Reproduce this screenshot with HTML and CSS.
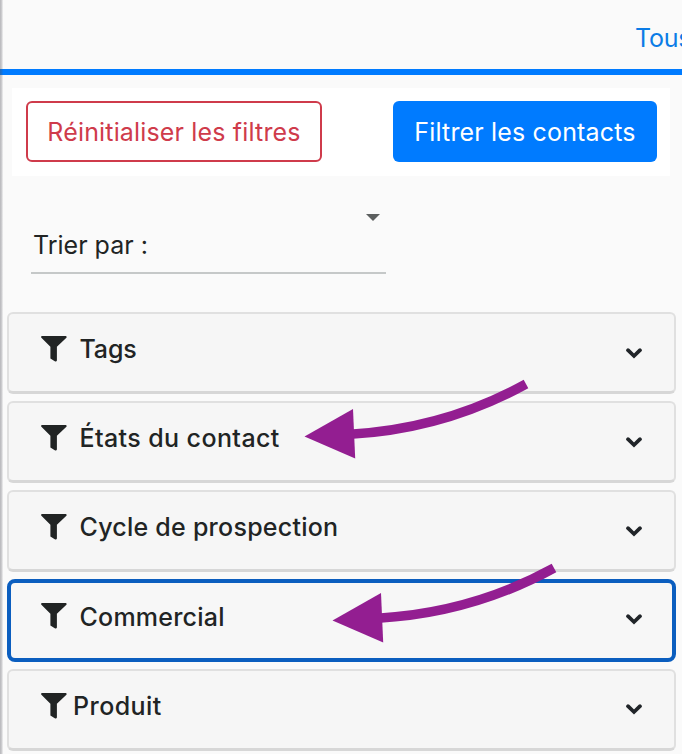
FILE: index.html
```html
<!DOCTYPE html>
<html lang="fr">
<head>
<meta charset="utf-8">
<title>Contacts</title>
<link rel="stylesheet" href="styles.css">
</head>
<body>
<svg class="defs" aria-hidden="true">
  <symbol id="funnel" viewBox="0 0 26 26"><path d="M0.8 0.1H24.9Q26.200 0.8 25.400 1.800L15.900 10.700V24.500Q15.400 26 13.800 25.200L9.400 22.400V10.700L0.400 1.800Q-0.500 0.800 0.800 0.100Z"/></symbol>
  <symbol id="chevron" viewBox="0 0 16 11"><path d="M2 2.200L8 8L14 2.200" fill="none" stroke="#212529" stroke-width="3.700" stroke-linecap="round"/></symbol>
</svg>
<div class="page">
  <header class="tabs"><a class="tab">Tous</a></header>
  <div class="actions">
    <button class="btn btn-reset">Réinitialiser les filtres</button>
    <button class="btn btn-apply">Filtrer les contacts</button>
  </div>
  <div class="sort"><span class="sort-label">Trier par :</span><span class="caret"></span></div>
  <main class="filters">
    <section class="card"><svg class="funnel"><use href="#funnel"/></svg><span class="name tags">Tags</span><svg class="chevron"><use href="#chevron"/></svg></section>
    <section class="card"><svg class="funnel"><use href="#funnel"/></svg><span class="name states">États du contact</span><svg class="chevron"><use href="#chevron"/></svg></section>
    <section class="card"><svg class="funnel"><use href="#funnel"/></svg><span class="name cycle">Cycle de prospection</span><svg class="chevron"><use href="#chevron"/></svg></section>
    <section class="card active"><svg class="funnel"><use href="#funnel"/></svg><span class="name sales">Commercial</span><svg class="chevron"><use href="#chevron"/></svg></section>
    <section class="card"><svg class="funnel"><use href="#funnel"/></svg><span class="name near">Produit</span><svg class="chevron"><use href="#chevron"/></svg></section>
  </main>
  <svg class="arrows" viewBox="0 0 682 754" aria-hidden="true">
    <g id="arrow"><path d="M526 384Q444 429 350 434.200" fill="none" stroke="#931e91" stroke-width="9.600"/><path d="M304.500 436.500L353 409L355.200 458.500Z" fill="#931e91"/></g>
    <use href="#arrow" x="28" y="184"/>
  </svg>
</div>
</body>
</html>
```
FILE: styles.css
```css
* { box-sizing: border-box; }
body { margin: 0; background: #fafafa; color: #212424; font-family: Inter, "Liberation Sans", sans-serif; font-size: 25px; }
.defs { display: none; }
.page { position: relative; width: 682px; height: 754px; overflow: hidden; }
.page::before { content: ""; position: absolute; z-index: 2; left: 0; top: 0; width: 3px; height: 100%; background: linear-gradient(90deg, rgba(80,80,90,.4), rgba(80,80,90,.25) 60%, rgba(80,80,90,.04)); }
.tabs { height: 75px; padding: 23px 0 0 635px; border-bottom: 6px solid #007bff; white-space: nowrap; line-height: 30px; }
.tab { color: #0b7ce6; letter-spacing: -.2px; }
.actions { display: flex; justify-content: space-between; height: 88px; margin: 13px 12px 0; padding: 13px 13px 0 14px; background: #fff; }
.btn { height: 61px; padding: 0; font: inherit; letter-spacing: .16px; border-radius: 6px; text-align: center; white-space: nowrap; }
.btn-reset { width: 296px; background: #fff; color: #cf3b4b; border: 2px solid #cf3b4b; }
.btn-apply { width: 264px; background: #007bff; color: #fff; border: 0; }
.sort { display: flex; justify-content: space-between; width: 355px; height: 61px; margin: 37px 0 0 31px; padding: 0 6px 0 2px; border-bottom: 2px solid #c5c8c8; }
.sort-label { margin-top: 16px; line-height: 32px; white-space: nowrap; }
.caret { width: 14px; height: 7px; margin-top: 1px; background: #5c5f5f; clip-path: polygon(0 0, 100% 0, 50% 100%); }
.filters { display: flex; flex-direction: column; gap: 7.200px; margin: 38px 6px 0 7px; }
.card { display: flex; align-items: flex-start; height: 82px; flex: none; padding: 22px 32px 0 32px; border: 2px solid #e0e0e0; border-bottom: 3px solid #d7d7d7; border-radius: 6px; background: #f6f6f6; }
.card.active { height: 83px; margin-top: -1px; padding: 20px 30px 0 30px; border: 4px solid #0b5ebf; border-radius: 8px; background: #f7f7f7; }
.funnel { width: 26px; height: 26px; fill: #212424; flex: none; }
.name { margin: -2px auto 0 12.500px; font-weight: 500; line-height: 30px; white-space: nowrap; }
.tags { letter-spacing: -.15px; }
.states { letter-spacing: .4px; }
.cycle { letter-spacing: .25px; }
.sales { letter-spacing: .22px; }
.near { margin-left: 6px; letter-spacing: .45px; }
.active .name { margin-top: -1px; }
.chevron { width: 16px; height: 11px; margin-top: 11.500px; overflow: visible; }
.arrows { position: absolute; inset: 0; width: 682px; height: 754px; pointer-events: none; }
```
